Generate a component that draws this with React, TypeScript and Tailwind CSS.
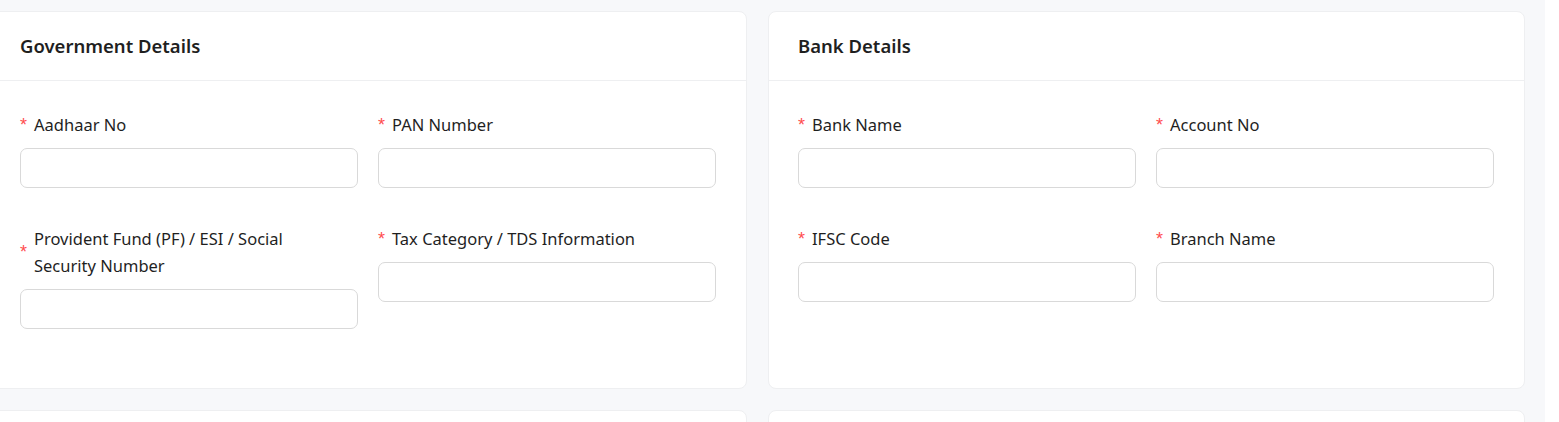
import React from 'react'

type Field = { label: string; wrap?: boolean }

const government: Field[] = [
  { label: 'Aadhaar No' },
  { label: 'PAN Number' },
  { label: 'Provident Fund (PF) / ESI / Social Security Number', wrap: true },
  { label: 'Tax Category / TDS Information' },
]

const bank: Field[] = [
  { label: 'Bank Name' },
  { label: 'Account No' },
  { label: 'IFSC Code' },
  { label: 'Branch Name' },
]

const FormField = ({ label, wrap }: Field) => (
  <div className="flex flex-col">
    <label className="flex items-center text-[16.5px] leading-[27px] text-[#1f1f1f]">
      <span className="mr-[5px] w-[9px] text-[18px] leading-none text-[#ff4d4f] font-['Liberation_Sans',sans-serif]">*</span>
      <span className={wrap ? 'max-w-[268px]' : ''}>{label}</span>
    </label>
    <input
      type="text"
      className="mt-[10px] h-[40px] w-full rounded-[7px] border border-[#d9d9d9] bg-white px-3 text-[14px] outline-none"
    />
  </div>
)

const Card = ({ title, fields }: { title?: string; fields?: Field[] }) => (
  <div className="h-[378px] w-[757px] shrink-0 rounded-[8px] border border-[#eeeff1] bg-white">
    {title && (
      <div className="border-b border-[#eeeff1] px-[29px] py-[21px]">
        <h2 className="text-[18.5px] leading-[26px] font-semibold text-[#1f1f1f]">{title}</h2>
      </div>
    )}
    {fields && (
      <div className="grid grid-cols-2 items-start gap-x-5 gap-y-[37px] pl-[29px] pr-[30px] pt-[30px]">
        {fields.map((f) => (
          <FormField key={f.label} {...f} />
        ))}
      </div>
    )}
  </div>
)

export default function App() {
  return (
    <div className="flex h-[422px] w-[1559px] overflow-hidden bg-white font-['Noto_Sans',sans-serif]">
      <div className="w-[1545px] shrink-0 overflow-hidden bg-[#f7f8fa] pt-[11px]">
        <div className="-ml-[10px] flex flex-col gap-[21px]">
          <div className="flex gap-[21px]">
            <Card title="Government Details" fields={government} />
            <Card title="Bank Details" fields={bank} />
          </div>
          <div className="flex gap-[21px]">
            <Card />
            <Card />
          </div>
        </div>
      </div>
    </div>
  )
}
